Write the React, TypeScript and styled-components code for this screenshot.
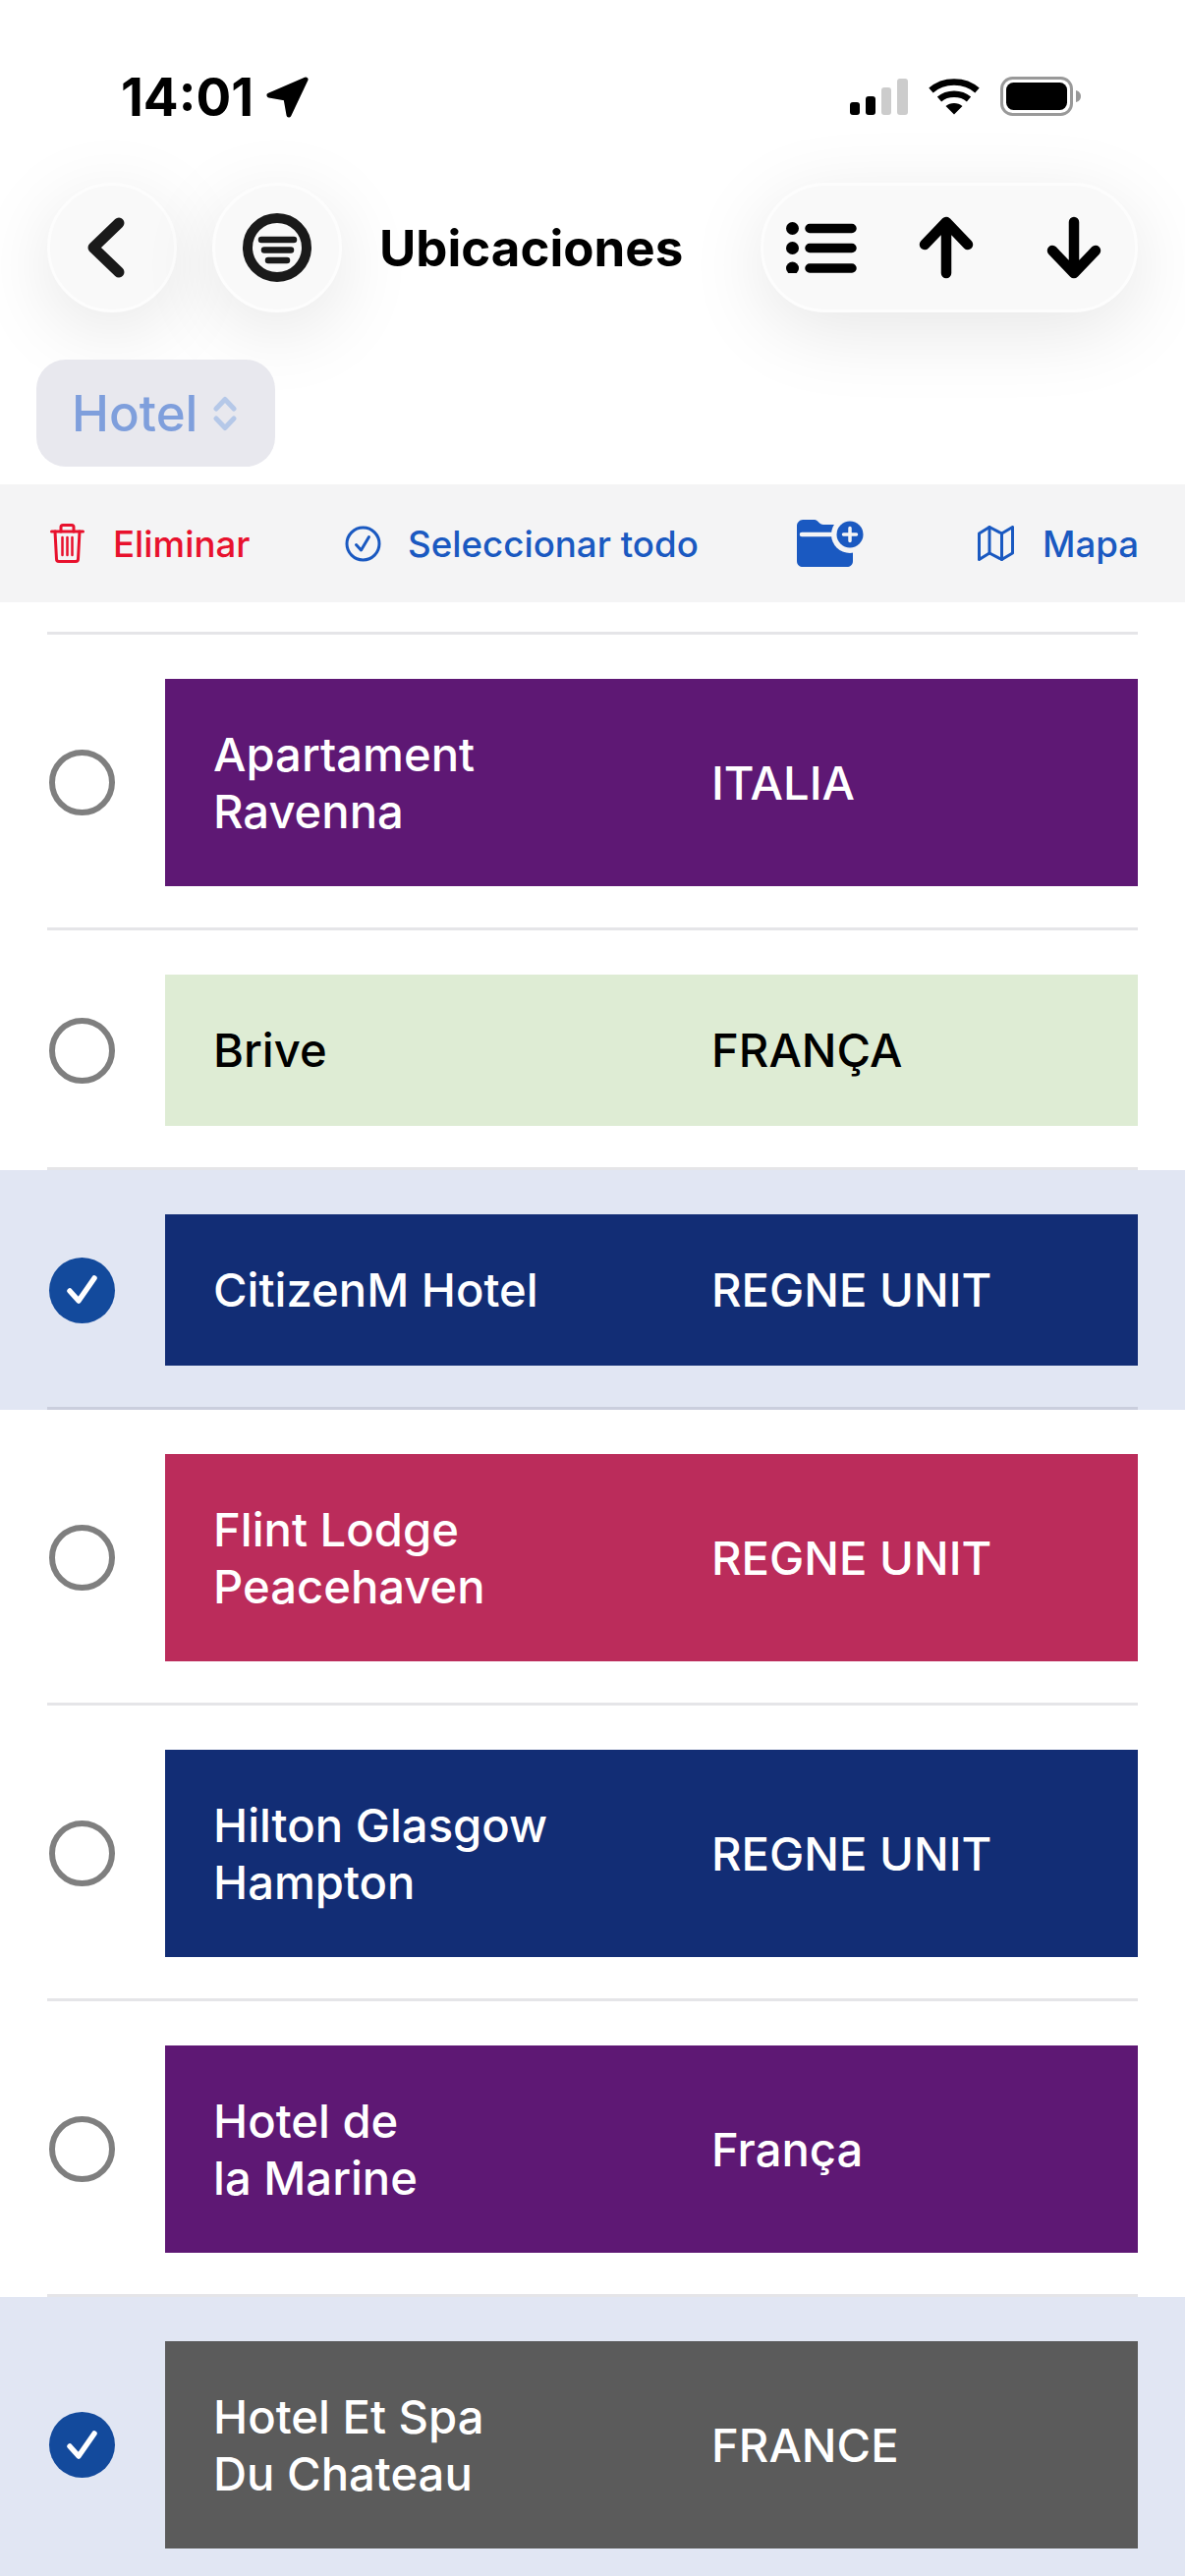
import React from "react";
import styled, { createGlobalStyle } from "styled-components";

const GlobalStyle = createGlobalStyle`
  html, body {
    margin: 0;
    padding: 0;
    background: #fff;
  }
  body {
    font-family: Inter, "Liberation Sans", sans-serif;
  }
`;

const Page = styled.div`
  width: 1206px;
  height: 2622px;
  overflow: hidden;
  background: #fff;
`;

const StatusBar = styled.div`
  display: flex;
  height: 186px;
  box-sizing: border-box;
  padding: 78px 106px 0 123px;
  justify-content: space-between;
  align-items: flex-start;
`;

const Clock = styled.div`
  display: flex;
  align-items: center;
  gap: 13px;
  font-size: 53px;
  font-weight: 700;
  line-height: 40px;
  color: #000;
`;

const StatusIcons = styled.div`
  display: flex;
  align-items: center;
  gap: 21px;
`;

const Header = styled.div`
  display: flex;
  align-items: center;
  padding: 0 48px;
`;

const RoundButton = styled.div<{ $gap?: number }>`
  width: 132px;
  height: 132px;
  box-sizing: border-box;
  flex: none;
  display: flex;
  align-items: center;
  justify-content: center;
  margin-right: ${(p) => p.$gap ?? 0}px;
  border-radius: 50%;
  border: 3px solid #fdfdfd;
  background: #f9f9f9;
  box-shadow: 0 18px 80px rgba(0, 0, 0, 0.1);
`;

const Title = styled.h1`
  margin: 0;
  font-size: 51px;
  font-weight: 700;
  color: #000;
`;

const ActionPill = styled.div`
  margin-left: auto;
  width: 384px;
  height: 132px;
  box-sizing: border-box;
  padding-left: 23px;
  display: grid;
  grid-template-columns: 135px 130px 56px;
  align-items: center;
  border-radius: 66px;
  border: 3px solid #fdfdfd;
  background: #f9f9f9;
  box-shadow: 0 18px 80px rgba(0, 0, 0, 0.1);
`;

const FilterChip = styled.div`
  position: relative;
  width: 243px;
  height: 109px;
  box-sizing: border-box;
  margin: 48px 0 18px 37px;
  padding-left: 36px;
  display: flex;
  align-items: center;
  gap: 16px;
  border-radius: 30px;
  background: #e8e8ee;
  color: #7f9fdc;
  font-size: 51px;
  font-weight: 500;
`;

const Toolbar = styled.div`
  position: relative;
  height: 120px;
  padding-left: 51px;
  display: grid;
  grid-template-columns: 300px 460px 184px auto;
  align-items: center;
  background: #f4f4f5;
`;

const ToolItem = styled.div<{ $danger?: boolean; $gap: number }>`
  display: flex;
  align-items: center;
  gap: ${(p) => p.$gap}px;
  font-size: 36.7px;
  font-weight: 500;
  color: ${(p) => (p.$danger ? "#e8112d" : "#1a59c1")};
`;

const List = styled.div`
  padding-top: 30px;
`;

const Divider = styled.div`
  height: 3px;
  margin: 0 48px;
  background: rgba(0, 0, 30, 0.1);
`;

const Row = styled.div<{ $selected?: boolean }>`
  background: ${(p) => (p.$selected ? "#e1e6f3" : "#fff")};
`;

const RowBody = styled.div`
  display: flex;
  align-items: center;
  padding: 45px 48px 42px 50px;
`;

const CheckCircle = styled.div<{ $selected?: boolean }>`
  width: 67px;
  height: 67px;
  flex: none;
  box-sizing: border-box;
  margin-right: 51px;
  display: flex;
  align-items: center;
  justify-content: center;
  border-radius: 50%;
  border: ${(p) => (p.$selected ? "none" : "6px solid #7f7f7f")};
  background: ${(p) => (p.$selected ? "#134a9c" : "transparent")};
`;

const Card = styled.div<{ $bg: string; $dark?: boolean; $tall?: boolean }>`
  flex: 1;
  height: ${(p) => (p.$tall ? 211 : 154)}px;
  box-sizing: border-box;
  padding-left: 49px;
  display: grid;
  grid-template-columns: 507px 1fr;
  align-items: center;
  background: ${(p) => p.$bg};
  color: ${(p) => (p.$dark ? "#000" : "#fff")};
  font-size: 47.2px;
  font-weight: 500;
  line-height: 58px;
`;

const CardName = styled.div`
  white-space: pre-line;
`;

const BackSvg = styled.svg`
  margin-right: 12px;
`;

const LocationArrow = () => (
  <svg width="44" height="42" viewBox="0 0 44 42">
    <path d="M40 3 L3 19 L20 22 L23 39 Z" fill="#000" stroke="#000" strokeWidth="5" strokeLinejoin="round" />
  </svg>
);

const SignalIcon = () => (
  <svg width="59" height="37" viewBox="0 0 59 37">
    <rect x="0" y="24" width="10" height="13" rx="3" fill="#000" />
    <rect x="16" y="18" width="10" height="19" rx="3" fill="#000" />
    <rect x="32" y="9" width="10" height="28" rx="3" fill="#ccc" />
    <rect x="48" y="0" width="11" height="37" rx="3" fill="#ccc" />
  </svg>
);

const WifiIcon = () => (
  <svg width="52" height="38" viewBox="0 0 52 38" fill="none" stroke="#000" strokeWidth="6.5">
    <path d="M2.5 13 C15 1.5 37 1.5 49.5 13" />
    <path d="M11 22 C19 15 33 15 41 22" />
    <path d="M26 37.5 L17.5 29 C22 25 30 25 34.5 29 Z" fill="#000" stroke="none" />
  </svg>
);

const BatteryIcon = () => (
  <svg width="82" height="40" viewBox="0 0 82 40">
    <rect x="1.5" y="1.5" width="71" height="37" rx="11" fill="none" stroke="#999" strokeWidth="3" />
    <rect x="6" y="6" width="62" height="28" rx="7.5" fill="#000" />
    <path d="M77 14 C81 15 82 18 82 20 C82 22 81 25 77 26 Z" fill="#999" />
  </svg>
);

const BackIcon = () => (
  <BackSvg width="38" height="62" viewBox="0 0 38 62" fill="none" stroke="#1a1a1a" strokeWidth="11" strokeLinecap="round" strokeLinejoin="round">
    <path d="M32 6 L6 31 L32 56" />
  </BackSvg>
);

const FilterIcon = () => (
  <svg width="70" height="70" viewBox="0 0 70 70" fill="none" stroke="#1a1a1a" strokeLinecap="round">
    <circle cx="35" cy="35" r="30" strokeWidth="10" />
    <path d="M19 27 H52 M22 37.5 H49 M26 48 H45" strokeWidth="6.5" />
  </svg>
);

const ListIcon = () => (
  <svg width="72" height="52" viewBox="0 0 72 52" fill="#000" stroke="#000">
    <circle cx="6.5" cy="6.5" r="6.5" stroke="none" />
    <circle cx="6.5" cy="26.5" r="6.5" stroke="none" />
    <circle cx="6.5" cy="47" r="6.5" stroke="none" />
    <path d="M24 6.5 H67 M24 26.5 H67 M24 47 H67" strokeWidth="9.5" strokeLinecap="round" />
  </svg>
);

const ArrowIcon = ({ down }: { down?: boolean }) => (
  <svg width="56" height="64" viewBox="0 0 56 64" fill="none" stroke="#000" strokeWidth="10.5" strokeLinecap="round" strokeLinejoin="round">
    {down ? <path d="M28 6 V58 M6 35 L28 58 L50 35" /> : <path d="M28 58 V6 M6 29 L28 6 L50 29" />}
  </svg>
);

const UpDownIcon = () => (
  <svg width="24" height="36" viewBox="0 0 24 36" fill="none" stroke="#b5c8e8" strokeWidth="5" strokeLinecap="round" strokeLinejoin="round">
    <path d="M3 13 L12 3.5 L21 13 M3 23 L12 32.5 L21 23" />
  </svg>
);

const TrashIcon = () => (
  <svg width="35" height="40" viewBox="0 0 35 40" fill="none" stroke="#e8112d" strokeWidth="3" strokeLinecap="round" strokeLinejoin="round">
    <path d="M1.5 8 H33.5" />
    <path d="M11 8 V3.5 C11 2 12 1.5 13 1.5 H22 C23 1.5 24 2 24 3.5 V8" />
    <path d="M5 8 L6.5 36 C6.5 37.5 7.5 38.5 9 38.5 H26 C27.5 38.5 28.5 37.5 28.5 36 L30 8" />
    <path d="M12.5 14 V32 M17.5 14 V32 M22.5 14 V32" strokeWidth="2.5" />
  </svg>
);

const CircleCheckIcon = () => (
  <svg width="37" height="37" viewBox="0 0 37 37" fill="none" stroke="#1a59c1" strokeWidth="3" strokeLinecap="round" strokeLinejoin="round">
    <circle cx="18.5" cy="18.5" r="16.5" />
    <path d="M11.5 19.5 L16.5 25 L24.5 11.5" />
  </svg>
);

const FolderPlusIcon = () => (
  <svg width="68" height="48" viewBox="0 0 68 48">
    <path d="M6 0 H18 C21 0 23 5 27 5 H51 C54 5 57 8 57 11 V42 C57 46 54 48 51 48 H6 C3 48 0 46 0 42 V6 C0 3 3 0 6 0 Z" fill="#1a59c1" />
    <path d="M5 15 H40" stroke="#f4f4f5" strokeWidth="4.5" strokeLinecap="round" />
    <circle cx="54" cy="15" r="19" fill="#f4f4f5" />
    <circle cx="54" cy="15" r="13.5" fill="#1a59c1" />
    <path d="M54 8.5 V21.5 M47.5 15 H60.5" stroke="#f4f4f5" strokeWidth="3.5" strokeLinecap="round" />
  </svg>
);

const MapIcon = () => (
  <svg width="37" height="36" viewBox="0 0 37 36" fill="none" stroke="#1a59c1" strokeWidth="3" strokeLinecap="round" strokeLinejoin="round">
    <path d="M1.5 8 L12 1.5 L24.5 8 L35.5 1.5 V28 L24.5 34.5 L12 28 L1.5 34.5 Z" />
    <path d="M12 1.5 V28 M24.5 8 V34.5" />
  </svg>
);

const TickIcon = () => (
  <svg width="34" height="32" viewBox="0 0 34 32" fill="none" stroke="#fff" strokeWidth="5.5" strokeLinecap="round" strokeLinejoin="round">
    <path d="M4 17 L13 27 L29 4" />
  </svg>
);

type Place = {
  name: string;
  country: string;
  bg: string;
  selected?: boolean;
  dark?: boolean;
};

const places: Place[] = [
  { name: "Apartament\nRavenna", country: "ITALIA", bg: "#5e1874" },
  { name: "Brive", country: "FRANÇA", bg: "#deecd4", dark: true },
  { name: "CitizenM Hotel", country: "REGNE UNIT", bg: "#122d75", selected: true },
  { name: "Flint Lodge\nPeacehaven", country: "REGNE UNIT", bg: "#bb2c5b" },
  { name: "Hilton Glasgow\nHampton", country: "REGNE UNIT", bg: "#122d75" },
  { name: "Hotel de\nla Marine", country: "França", bg: "#5e1874" },
  { name: "Hotel Et Spa\nDu Chateau", country: "FRANCE", bg: "#5b5b5b", selected: true },
];

const App = () => {
  return (
    <Page>
      <GlobalStyle />
      <StatusBar>
        <Clock>
          14:01
          <LocationArrow />
        </Clock>
        <StatusIcons>
          <SignalIcon />
          <WifiIcon />
          <BatteryIcon />
        </StatusIcons>
      </StatusBar>

      <Header>
        <RoundButton $gap={36}>
          <BackIcon />
        </RoundButton>
        <RoundButton $gap={38}>
          <FilterIcon />
        </RoundButton>
        <Title>Ubicaciones</Title>
        <ActionPill>
          <ListIcon />
          <ArrowIcon />
          <ArrowIcon down />
        </ActionPill>
      </Header>

      <FilterChip>
        Hotel
        <UpDownIcon />
      </FilterChip>

      <Toolbar>
        <ToolItem $danger $gap={29}>
          <TrashIcon />
          Eliminar
        </ToolItem>
        <ToolItem $gap={27}>
          <CircleCheckIcon />
          Seleccionar todo
        </ToolItem>
        <ToolItem $gap={0}>
          <FolderPlusIcon />
        </ToolItem>
        <ToolItem $gap={29}>
          <MapIcon />
          Mapa
        </ToolItem>
      </Toolbar>

      <List>
        <Divider />
        {places.map((place) => (
          <Row key={place.name} $selected={place.selected}>
            <RowBody>
              <CheckCircle $selected={place.selected}>{place.selected && <TickIcon />}</CheckCircle>
              <Card $bg={place.bg} $dark={place.dark} $tall={place.name.includes("\n")}>
                <CardName>{place.name}</CardName>
                <div>{place.country}</div>
              </Card>
            </RowBody>
            <Divider />
          </Row>
        ))}
      </List>
    </Page>
  );
};

export default App;
